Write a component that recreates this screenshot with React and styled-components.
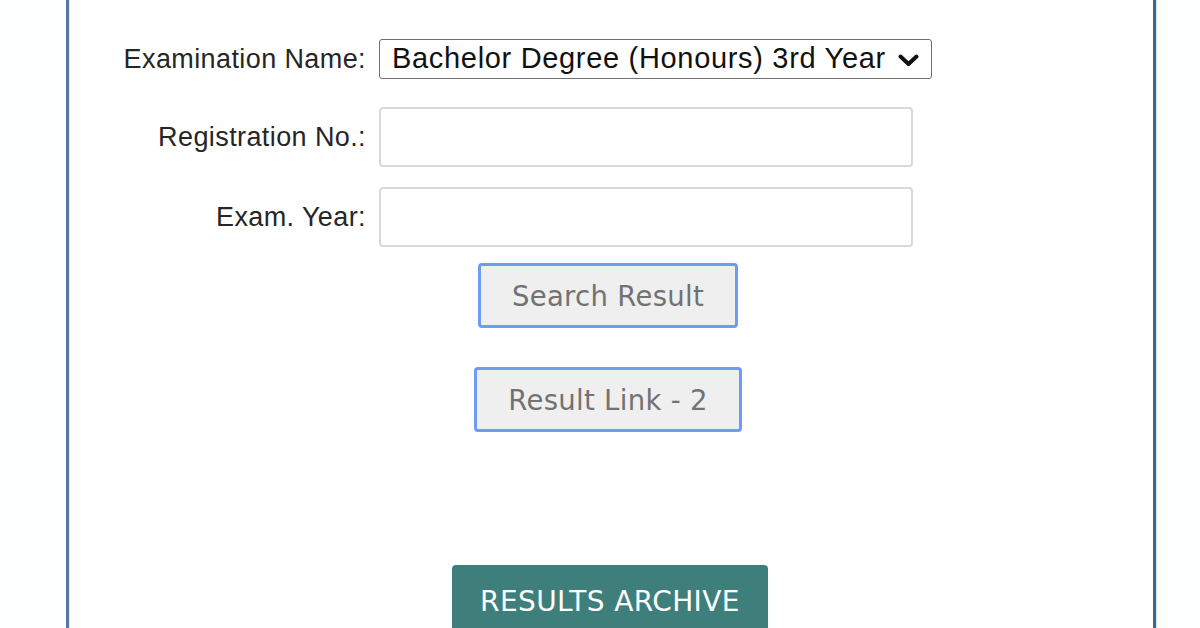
import React from "react";
import styled, { createGlobalStyle } from "styled-components";

const Global = createGlobalStyle`
  html, body { margin: 0; padding: 0; background: #ffffff; overflow: hidden; }
  body { font-family: "Liberation Sans", Arial, sans-serif; }
`;

const Page = styled.div`
  width: 1200px;
  height: 628px;
  overflow: hidden;
  background: #fdfeff;
`;

const Panel = styled.div`
  margin-left: 66px;
  width: 1090px;
  height: 700px;
  background: #ffffff;
  border-left: 3px solid #56799a;
  border-right: 3px solid #456683;
  box-shadow: 1px 0 0 #d6e6f4, inset 1px 0 0 #dbe8f3;
  display: flex;
  flex-direction: column;
  padding-top: 39px;
  box-sizing: border-box;
`;

const Row = styled.div`
  display: flex;
  align-items: center;
  gap: 13px;
  margin-top: ${(p) => p.$top || 0}px;
  padding-left: 47px;
`;

const Label = styled.label`
  width: 250px;
  flex: none;
  text-align: right;
  font-family: "Liberation Sans", Arial, sans-serif;
  font-size: 27px;
  letter-spacing: 0.4px;
  color: #262626;
  white-space: nowrap;
`;

const SelectWrap = styled.div`
  position: relative;
  width: 553px;
  height: 40px;
`;

const Select = styled.select`
  appearance: none;
  -webkit-appearance: none;
  width: 100%;
  height: 100%;
  box-sizing: border-box;
  border: 1px solid #6f6f6f;
  border-radius: 3px;
  background: #ffffff;
  padding: 0 0 2px 12px;
  font-family: "Liberation Sans", Arial, sans-serif;
  font-size: 29px;
  letter-spacing: 0.68px;
  color: #111111;
  outline: none;
`;

const Chevron = styled.svg`
  position: absolute;
  right: 13px;
  top: 15px;
  width: 21px;
  height: 13px;
  pointer-events: none;
`;

const Input = styled.input`
  width: 534px;
  height: 60px;
  box-sizing: border-box;
  border: 2px solid #d9d9d9;
  border-radius: 4px;
  background: #ffffff;
  outline: none;
`;

const Actions = styled.div`
  display: flex;
  justify-content: center;
  padding-right: ${(p) => p.$shift || 0}px;
  margin-top: ${(p) => p.$top || 0}px;
`;

const GreyButton = styled.button`
  height: 65px;
  box-sizing: border-box;
  border: 3px solid #6e9bf5;
  border-radius: 4px;
  background: #efefef;
  padding: 0 ${(p) => p.$pad}px;
  font-family: "DejaVu Sans", Verdana, sans-serif;
  font-size: 27.5px;
  color: #727272;
  letter-spacing: 0.3px;
`;

const ArchiveButton = styled.button`
  height: 80px;
  box-sizing: border-box;
  border: none;
  border-radius: 4px 4px 0 0;
  background: #3e7f7b;
  padding: 0 28px 8px;
  font-family: "DejaVu Sans", Verdana, sans-serif;
  font-size: 28px;
  color: #ffffff;
  letter-spacing: 0.4px;
`;

export default function App() {
  return (
    <Page>
      <Global />
      <Panel>
        <Row>
          <Label>Examination Name:</Label>
          <SelectWrap>
            <Select defaultValue="hons3">
              <option value="hons3">Bachelor Degree (Honours) 3rd Year</option>
            </Select>
            <Chevron viewBox="0 0 21 13">
              <path d="M2.5 2.5 L10.5 10 L18.5 2.5" fill="none" stroke="#111" strokeWidth="4" strokeLinecap="round" strokeLinejoin="round" />
            </Chevron>
          </SelectWrap>
        </Row>
        <Row $top={28}>
          <Label>Registration No.:</Label>
          <Input type="text" />
        </Row>
        <Row $top={20}>
          <Label>Exam. Year:</Label>
          <Input type="text" />
        </Row>
        <Actions $top={16} $shift={6}>
          <GreyButton $pad={31}>Search Result</GreyButton>
        </Actions>
        <Actions $top={39} $shift={6}>
          <GreyButton $pad={31}>Result Link - 2</GreyButton>
        </Actions>
        <Actions $top={133} $shift={2}>
          <ArchiveButton>RESULTS ARCHIVE</ArchiveButton>
        </Actions>
      </Panel>
    </Page>
  );
}
